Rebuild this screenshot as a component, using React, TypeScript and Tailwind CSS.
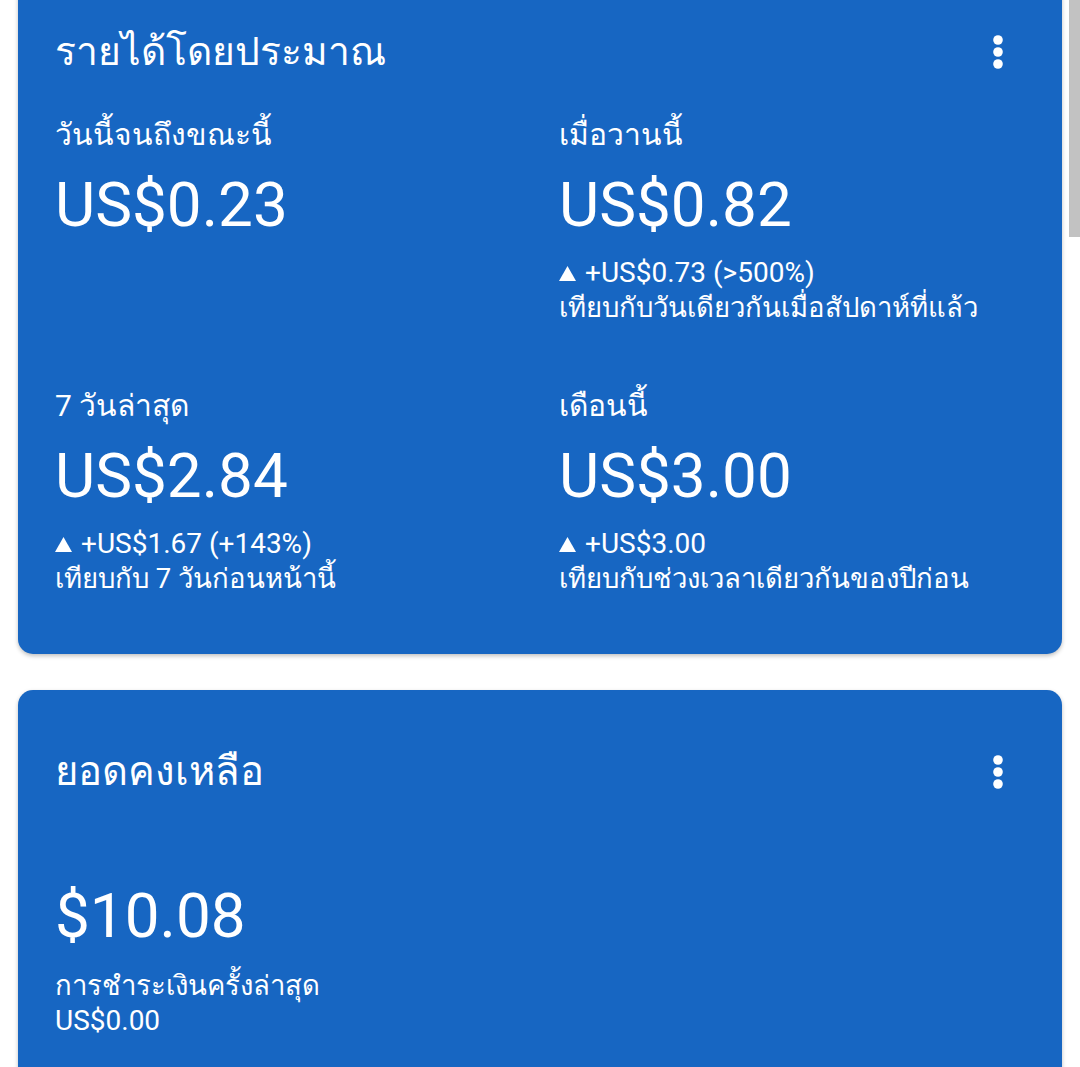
import React from 'react'

const Dots = () => (
    <svg width="24" height="36" viewBox="0 0 24 36" fill="white">
        <circle cx="12" cy="6" r="4.8" />
        <circle cx="12" cy="18" r="4.8" />
        <circle cx="12" cy="30" r="4.8" />
    </svg>
)

const UpArrow = () => (
    <svg width="17" height="15" viewBox="0 0 17 15" fill="white" className="mr-[9px] inline-block align-[1px]">
        <path d="M8.5 0L17 15H0z" />
    </svg>
)

type Stat = {
    label: string
    value: string
    delta?: string
    compare?: string
}

const stats: Stat[] = [
    { label: 'วันนี้จนถึงขณะนี้', value: 'US$0.23' },
    {
        label: 'เมื่อวานนี้',
        value: 'US$0.82',
        delta: '+US$0.73 (>500%)',
        compare: 'เทียบกับวันเดียวกันเมื่อสัปดาห์ที่แล้ว',
    },
    {
        label: '7 วันล่าสุด',
        value: 'US$2.84',
        delta: '+US$1.67 (+143%)',
        compare: 'เทียบกับ 7 วันก่อนหน้านี้',
    },
    {
        label: 'เดือนนี้',
        value: 'US$3.00',
        delta: '+US$3.00',
        compare: 'เทียบกับช่วงเวลาเดียวกันของปีก่อน',
    },
]

const StatBlock = ({ stat }: { stat: Stat }) => (
    <div>
        <div className="text-[30px] leading-[36px]">{stat.label}</div>
        <div className="mt-[16px] text-[62px] leading-[72px]">{stat.value}</div>
        {stat.delta && (
            <div className="mt-[14px] text-[28px] leading-[35px]">
                <UpArrow />
                {stat.delta}
            </div>
        )}
        {stat.compare && <div className="text-[27.5px] leading-[35px]">{stat.compare}</div>}
    </div>
)

const App = () => {
    return (
        <div className="relative min-h-screen overflow-hidden bg-white font-[Roboto,sans-serif] text-white">
            <div className="absolute right-0 top-0 h-[237px] w-[11px] bg-[#c2c2c2]" />

            <div className="px-[18px]">
                {/* estimated earnings */}
                <section className="-mt-[20px] rounded-[15px] bg-[#1766c2] pl-[37px] pr-[52px] pt-[50px] pb-[58px] shadow-[0_2px_4px_rgba(0,0,0,0.25)]">
                    <div className="flex items-center justify-between">
                        <h1 className="text-[39px] leading-[44px]">รายได้โดยประมาณ</h1>
                        <Dots />
                    </div>

                    <div className="mt-[43px] grid grid-cols-[504px_1fr] gap-y-[63px]">
                        {stats.map((s) => (
                            <StatBlock key={s.label} stat={s} />
                        ))}
                    </div>
                </section>

                {/* balance */}
                <section className="mt-[36px] rounded-[15px] bg-[#1766c2] pl-[37px] pr-[52px] pt-[60px] pb-[80px] shadow-[0_2px_4px_rgba(0,0,0,0.25)]">
                    <div className="flex items-center justify-between">
                        <h2 className="text-[40px] leading-[44px]">ยอดคงเหลือ</h2>
                        <Dots />
                    </div>

                    <div className="mt-[86px] text-[62px] leading-[72px]">$10.08</div>
                    <div className="mt-[16px] text-[27.5px] leading-[35px]">การชำระเงินครั้งล่าสุด</div>
                    <div className="text-[28px] leading-[35px]">US$0.00</div>
                </section>
            </div>
        </div>
    )
}

export default App
